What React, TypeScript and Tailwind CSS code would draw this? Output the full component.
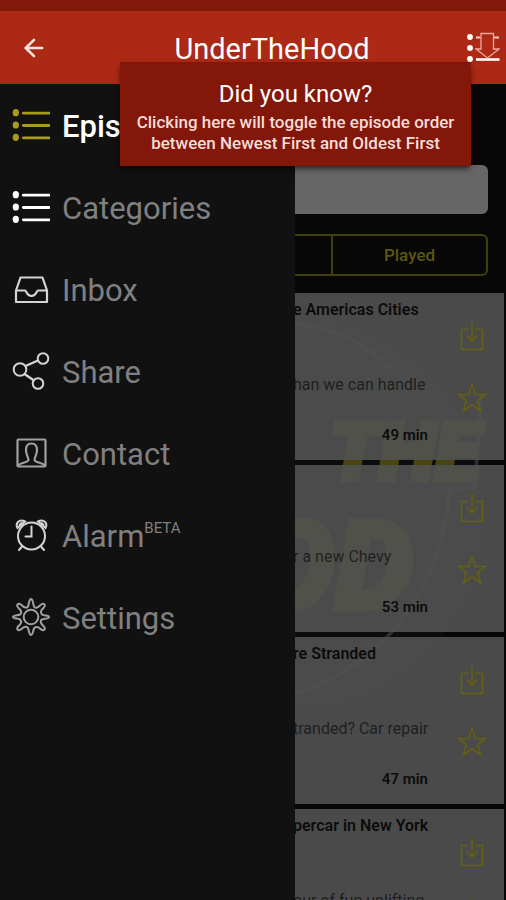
import type { ReactNode } from "react";
import { ArrowLeft } from "lucide-react";

type IconProps = { className?: string };

function ListIcon({ className }: IconProps) {
  return (
    <svg viewBox="0 0 40 36" className={className} aria-hidden>
      {[5, 18, 31].map((y) => (
        <g key={y}>
          <ellipse cx="4" cy={y} rx="3.3" ry="3.8" fill="currentColor" />
          <path d={`M12 ${y + 0.5}H39`} stroke="currentColor" strokeWidth="3" strokeLinecap="round" />
        </g>
      ))}
    </svg>
  );
}

function InboxIcon() {
  return (
    <svg viewBox="0 0 38 38" className="size-[38px] text-neutral-300" fill="none" stroke="currentColor" strokeWidth="2.200" strokeLinejoin="round" aria-hidden>
      <path d="M4 32V20.500L8.500 7.500H30.500L35 20.500V32ZM4 20.500H13C14.500 20.500 14.500 26 19.500 26S24.500 20.500 26 20.500H35" />
    </svg>
  );
}

function ShareIcon() {
  return (
    <svg viewBox="0 0 38 38" className="size-[38px] text-neutral-300" fill="none" stroke="currentColor" strokeWidth="2" aria-hidden>
      <circle cx="8" cy="17.500" r="6.300" />
      <circle cx="31" cy="6.500" r="5.300" />
      <circle cx="26" cy="31.500" r="5.300" />
      <path d="M13.500 14L26 8.500M12.500 22L22 28.500" strokeWidth="2.400" />
    </svg>
  );
}

function ContactIcon() {
  return (
    <svg viewBox="0 0 38 38" className="size-[38px] text-neutral-400" fill="none" stroke="currentColor" strokeWidth="2.200" strokeLinejoin="round" aria-hidden>
      <rect x="5.500" y="5.500" width="28" height="27" rx="1" />
      <path d="M6.500 31.500C8 28.500 15.500 29 16.500 26C16.500 23 14 21 14 16C14 12 16 9.500 19.500 9.500S25 12 25 16C25 21 22.500 23 22.500 26C23.500 29 31 28.500 32.500 31.500" />
    </svg>
  );
}

function AlarmIcon() {
  return (
    <svg viewBox="0 0 38 38" className="size-[38px] text-neutral-300" fill="none" stroke="currentColor" strokeWidth="2" strokeLinecap="round" aria-hidden>
      <circle cx="19.500" cy="20" r="13.500" />
      <path d="M19.500 10.500V20.500H13.500M10 30.500L7 34M29 30.500L32 34" />
      <path d="M5.500 12C3 7.500 7 2.500 13 5.500L5.500 12ZM33.500 12C36 7.500 32 2.500 26 5.500L33.500 12Z" />
      <path d="M7.500 9L9.500 7M31.500 9L29.500 7" />
    </svg>
  );
}

function SettingsIcon() {
  return (
    <svg viewBox="0 0 38 38" className="size-[38px] text-neutral-400" fill="none" stroke="currentColor" strokeWidth="2" strokeLinejoin="round" aria-hidden>
      <circle cx="19" cy="19" r="7.300" />
      <path d="M16 8.500C17 6 17 1 19 1S21 6 22 8.500S26 9.500 28 7.500S31.500 5.500 32.500 6.500S32.500 9 30.500 11S28.500 15 30 16.500S37 17 37 19S32 20.500 30 21.500S28.500 25 30.500 27S33.500 30.500 32.500 31.500S30 32.500 28 30.500S23 28.500 22 30.500S21 37 19 37S17 32 16 30S12 28.500 10 30.500S6.500 32.500 5.500 31.500S5.500 29 7.500 27S9.500 23 8 21.500S1 21 1 19S6 17.500 8 16.500S9.500 13 7.500 11S4.500 7.500 5.500 6.500S8 5.500 10 7.500S15 10.500 16 8.500Z" />
    </svg>
  );
}

function OrderIcon() {
  return (
    <svg viewBox="0 0 34 32" className="h-8 w-[34px]" aria-hidden>
      {[5, 16, 27].map((y) => (
        <circle key={y} cx="4" cy={y} r="2.900" fill="#fff" />
      ))}
      <path d="M10 5.500H14.500M28 5.500H33" stroke="#f6cfc8" strokeWidth="1.800" />
      <path d="M10 27.500H33.500" stroke="#fff" strokeWidth="2.600" />
      <path d="M15 1.500H27.500V17H33L21.500 26L10 17H15Z" fill="#ac2915" stroke="#f0a99f" strokeWidth="1.300" />
    </svg>
  );
}

function DownloadIcon() {
  return (
    <svg viewBox="0 0 24 30" className="h-[30px] w-6" fill="none" stroke="currentColor" strokeWidth="1.600" aria-hidden>
      <path d="M8 8.500H1.500V28.500H22.500V8.500H16M12 1V20M6.500 14.500L12 20L17.500 14.500" />
    </svg>
  );
}

function StarIcon() {
  return (
    <svg viewBox="0 0 30 30" className="size-[30px]" fill="none" stroke="currentColor" strokeWidth="1.600" aria-hidden>
      <path d="M15 2L18.300 11.500H28.500L20.500 17.500L23.500 28L15 21.500L6.500 28L9.500 17.500L1.500 11.500H11.700Z" />
    </svg>
  );
}

const MENU: { label: string; icon: ReactNode; badge?: string; active?: boolean }[] = [
  { label: "Episodes", icon: <ListIcon className="h-9 w-[38px] text-[#a99c1a]" />, active: true },
  { label: "Categories", icon: <ListIcon className="h-9 w-[38px] text-white" /> },
  { label: "Inbox", icon: <InboxIcon /> },
  { label: "Share", icon: <ShareIcon /> },
  { label: "Contact", icon: <ContactIcon /> },
  { label: "Alarm", icon: <AlarmIcon />, badge: "BETA" },
  { label: "Settings", icon: <SettingsIcon /> },
];

const EPISODES = [
  { title: "e Americas Cities", summary: "han we can handle", length: "49 min" },
  { title: "", summary: "r a new Chevy", length: "53 min" },
  { title: "re Stranded", summary: "tranded? Car repair", length: "47 min" },
  { title: "percar in New York", summary: "our of fun uplifting", length: "" },
];

// Show logo behind the list; the cards let a little of it through
function Watermark() {
  return (
    <svg viewBox="0 0 210 420" className="absolute left-0 top-0 h-[420px] w-[210px]" aria-hidden>
      <circle cx="-6" cy="220" r="196" fill="#0c0c0e" />
      <path d="M-10 30C40 32 70 50 96 76M186 100L180 195H154C152 270 105 372 -6 402" fill="none" stroke="#2c2c31" strokeWidth="4" />
      <g fill="#4a4513" stroke="#4a4513" strokeWidth="5" fontFamily="Roboto, sans-serif" fontWeight="900" fontStyle="italic">
        <text x="34" y="187" fontSize="82">THE</text>
        <text x="-126" y="316" fontSize="124">OOD</text>
      </g>
    </svg>
  );
}

function EpisodeCard({ episode }: { episode: (typeof EPISODES)[number] }) {
  return (
    <li className="relative flex h-[167px] shrink-0 bg-[#525252]/90 text-black/85">
      <div className="-ml-0.5 flex min-w-0 flex-1 flex-col whitespace-nowrap pt-[5px]">
        <h2 className="h-[75px] text-base font-semibold">{episode.title}</h2>
        <p className="h-[51px] text-base text-black/60">{episode.summary}</p>
        <p className="pr-[18px] text-right text-[15px] font-semibold">{episode.length}</p>
      </div>
      <div className="mr-1.5 flex w-[52px] flex-col items-center gap-8 pt-7 text-[#636011]">
        <button type="button" aria-label="Download episode">
          <DownloadIcon />
        </button>
        <button type="button" aria-label="Add to favourites">
          <StarIcon />
        </button>
      </div>
    </li>
  );
}

export default function App() {
  return (
    <div className="relative flex h-screen flex-col overflow-hidden bg-[#070707] font-[Roboto,sans-serif]">
      <div className="h-[11px] shrink-0 bg-[#831709]" />
      <header className="relative flex h-[73px] shrink-0 items-center justify-between bg-[#ac2915] pl-5 pr-1.5 text-white">
        <button type="button" aria-label="Back" className="flex w-[60px]">
          <ArrowLeft className="size-7 text-[#fbe3df]" strokeWidth={2.2} />
        </button>
        <h1 className="pt-0.5 text-[29px] leading-9">UnderTheHood</h1>
        <button type="button" aria-label="Toggle episode order" className="flex w-9 justify-end">
          <OrderIcon />
        </button>
        <div role="status" className="absolute right-[35px] top-[51px] z-10 w-[351px] bg-[#831709] pb-3 pt-4 text-center shadow-md shadow-black/50">
          <p className="text-2xl">Did you know?</p>
          <p className="pt-0.5 text-[17px] font-medium leading-[21px] text-[#f6dcd8]">
            Clicking here will toggle the episode order
            <br />
            between Newest First and Oldest First
          </p>
        </div>
      </header>

      <div className="flex min-h-0 flex-1">
        <nav className="w-[295px] shrink-0 bg-[#111]">
          {MENU.map((item) => (
            <a key={item.label} href="#" className="flex h-[82px] items-center gap-3 pl-3">
              {item.icon}
              <span className={item.active ? "pt-1 text-[31px] font-medium text-white" : "pt-1 text-[31px] text-[#808080]"}>
                {item.label}
                {item.badge && <sup className="-top-3.5 text-[15px] leading-none">{item.badge}</sup>}
              </span>
            </a>
          ))}
        </nav>

        <main className="flex min-w-0 flex-1 flex-col overflow-hidden">
          <div className="flex flex-col gap-5 pb-[17px] pr-[18px] pt-[81px]">
            <input type="search" aria-label="Search episodes" className="h-[49px] w-full rounded-r-md bg-[#666]" />
            <div className="flex h-[42px] rounded-r-md border-2 border-l-0 border-[#423f0a] text-[#5d580e]">
              <button type="button" aria-label="All episodes" className="w-9" />
              <button type="button" className="flex-1 border-l-2 border-[#423f0a] pt-0.5 text-[17px] font-medium">
                Played
              </button>
            </div>
          </div>
          <div className="relative flex min-h-0 flex-1 flex-col overflow-hidden pr-0.5">
            <Watermark />
            <ul className="flex flex-col gap-[5px]">
              {EPISODES.map((episode) => (
                <EpisodeCard key={episode.summary} episode={episode} />
              ))}
            </ul>
          </div>
        </main>
      </div>
    </div>
  );
}
